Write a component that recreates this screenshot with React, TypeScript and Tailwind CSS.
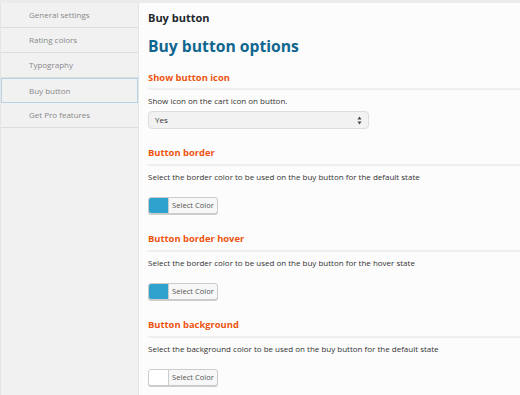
import React from "react";

const navItems = ["General settings", "Rating colors", "Typography", "Buy button", "Get Pro features"];

function ColorButton({ color }: { color: string }) {
  return (
    <div className="flex h-[17px] w-[70px] overflow-hidden rounded-[3px] border border-[#cccccc] bg-[#f7f7f7] shadow-[0_1px_0_#cccccc]">
      <div className="h-full w-[20px] border-r border-[#cccccc]" style={{ backgroundColor: color }} />
      <div className="flex flex-1 items-center justify-center text-[7.6px] text-[#555555]">Select Color</div>
    </div>
  );
}

function Section({ title, desc, color }: { title: string; desc: string; color: string }) {
  return (
    <div className="mt-[18px]">
      <div className="pb-[4px] text-[9.4px] font-bold leading-[14px] text-[#ec5410]">{title}</div>
      <div className="h-[2px] bg-[#efefef]" />
      <div className="mt-[5px] text-[8px] leading-[12px] text-[#333333]">{desc}</div>
      <div className="mt-[14px]">
        <ColorButton color={color} />
      </div>
    </div>
  );
}

export default function App() {
  return (
    <div
      className="flex h-[395px] w-[520px] flex-col overflow-hidden bg-[#fcfcfc]"
      style={{ fontFamily: '"Open Sans", "Liberation Sans", sans-serif' }}
    >
      <div className="h-[3px] shrink-0 bg-[#ebebeb]" />
      <div className="flex flex-1">
        <div className="w-[139px] shrink-0 border-l border-r border-[#e5e5e5] bg-[#f1f1f1]">
          {navItems.map((item) => (
            <div
              key={item}
              className={
                item === "Buy button"
                  ? "flex h-[25px] items-center border border-[#b8d3e6] pl-[27px] text-[8px] text-[#888888]"
                  : "flex h-[25px] items-center border-b border-[#dddddd] pl-[28px] text-[8px] text-[#888888]"
              }
            >
              {item}
            </div>
          ))}
        </div>
        <div className="flex-1 pl-[9px]">
          <div className="mt-[7px] text-[11px] font-bold leading-[16px] text-[#23282d]">Buy button</div>
          <div className="mt-[8px] text-[15.7px] font-bold leading-[24px] text-[#10668f]">Buy button options</div>
          <div className="mt-[13px] pb-[3px] text-[9.4px] font-bold leading-[14px] text-[#ec5410]">Show button icon</div>
          <div className="h-[2px] bg-[#efefef]" />
          <div className="mt-[5px] text-[8px] leading-[12px] text-[#333333]">Show icon on the cart icon on button.</div>
          <div className="mt-[4px] flex h-[18px] w-[221px] items-center justify-between rounded-[4px] border border-[#dddddd] bg-[#f2f2f2] px-[6px] text-[8px] text-[#333333]">
            <span>Yes</span>
            <svg width="5" height="9" viewBox="0 0 5 9">
              <path d="M2.5 0.5 L4.5 3.5 L0.5 3.5 Z" fill="#444" />
              <path d="M2.5 8.5 L4.5 5.5 L0.5 5.5 Z" fill="#444" />
            </svg>
          </div>
          <div className="mt-[-1px]">
            <Section
              title="Button border"
              desc="Select the border color to be used on the buy button for the default state"
              color="#2ea2cc"
            />
          </div>
          <Section
            title="Button border hover"
            desc="Select the border color to be used on the buy button for the hover state"
            color="#2ea2cc"
          />
          <Section
            title="Button background"
            desc="Select the background color to be used on the buy button for the default state"
            color="#ffffff"
          />
        </div>
      </div>
    </div>
  );
}
